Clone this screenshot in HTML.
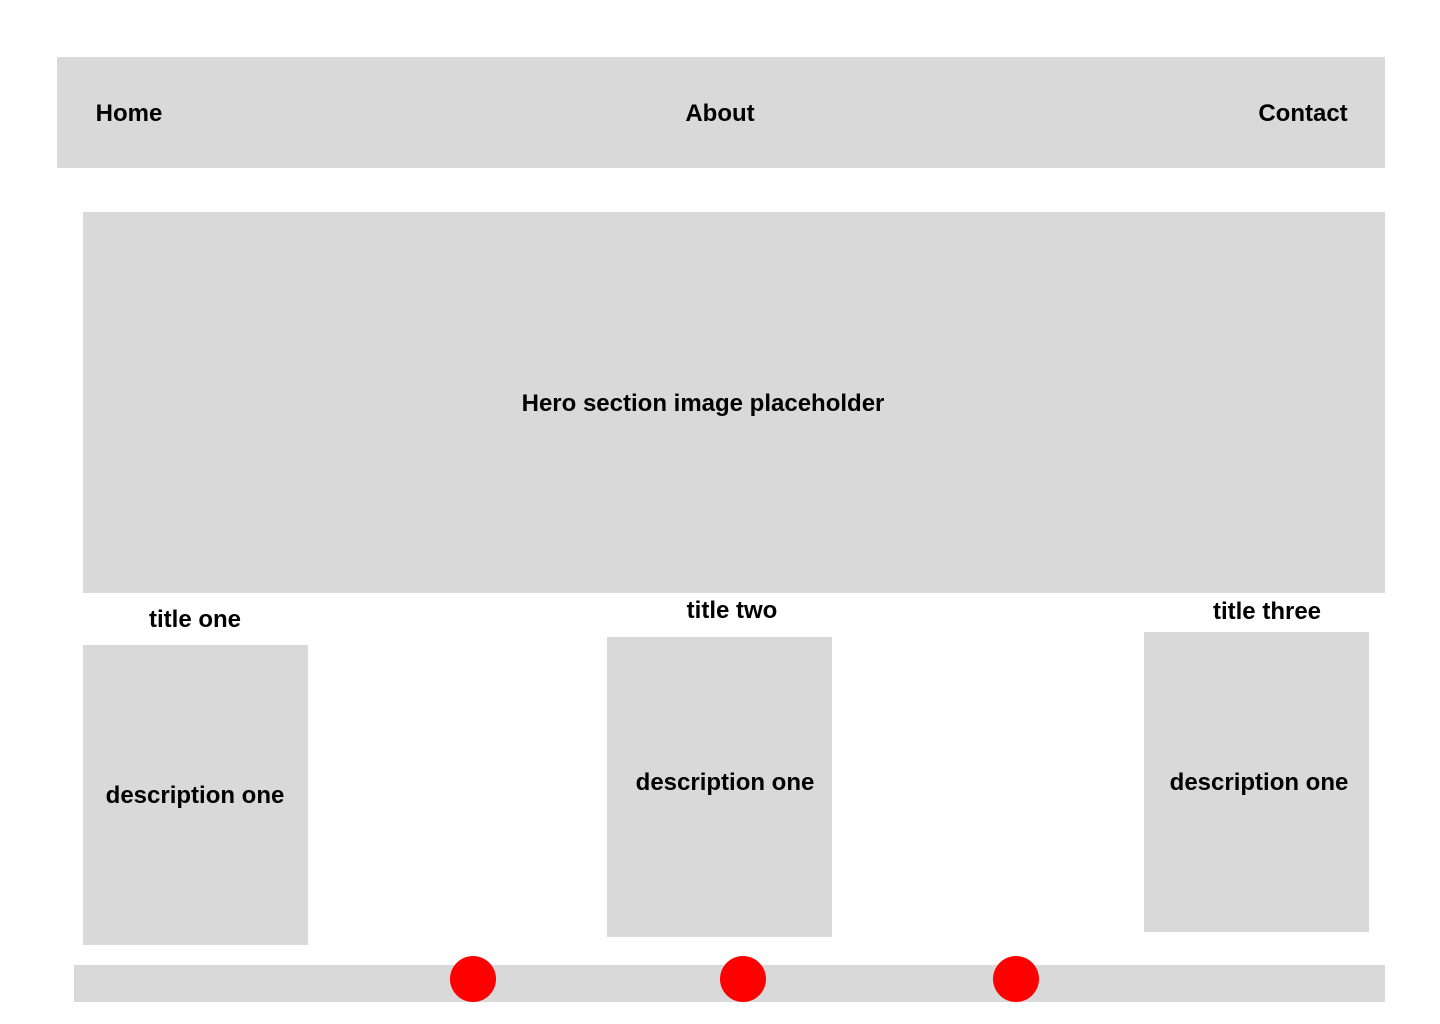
<!DOCTYPE html>
<html><head><style>
body{margin:0;width:1440px;height:1024px;background:#fff;position:relative;font-family:"Liberation Sans",sans-serif;font-weight:bold;font-size:24px;color:#000;overflow:hidden}
.b{position:absolute;background:#d9d9d9}
.t{position:absolute;white-space:nowrap;line-height:1;transform:translate(-50%,-50%)}
.c{position:absolute;width:46px;height:46px;border-radius:50%;background:#ff0000;transform:translate(-50%,-50%)}
</style></head><body>
<div class="b" style="left:57px;top:57px;width:1328px;height:111px"></div>
<div class="t" style="left:129px;top:114px">Home</div>
<div class="t" style="left:720px;top:114px">About</div>
<div class="t" style="left:1303px;top:114px">Contact</div>
<div class="b" style="left:83px;top:212px;width:1302px;height:381px"></div>
<div class="t" style="left:703px;top:404px">Hero section image placeholder</div>
<div class="t" style="left:195px;top:620px">title one</div>
<div class="b" style="left:83px;top:645px;width:225px;height:300px"></div>
<div class="t" style="left:195px;top:796px">description one</div>
<div class="t" style="left:732px;top:611px">title two</div>
<div class="b" style="left:607px;top:637px;width:225px;height:300px"></div>
<div class="t" style="left:725px;top:783px">description one</div>
<div class="t" style="left:1267px;top:612px">title three</div>
<div class="b" style="left:1144px;top:632px;width:225px;height:300px"></div>
<div class="t" style="left:1259px;top:783px">description one</div>
<div class="b" style="left:74px;top:965px;width:1311px;height:37px"></div>
<div class="c" style="left:473px;top:979px"></div>
<div class="c" style="left:743px;top:979px"></div>
<div class="c" style="left:1016px;top:979px"></div>
</body></html>
